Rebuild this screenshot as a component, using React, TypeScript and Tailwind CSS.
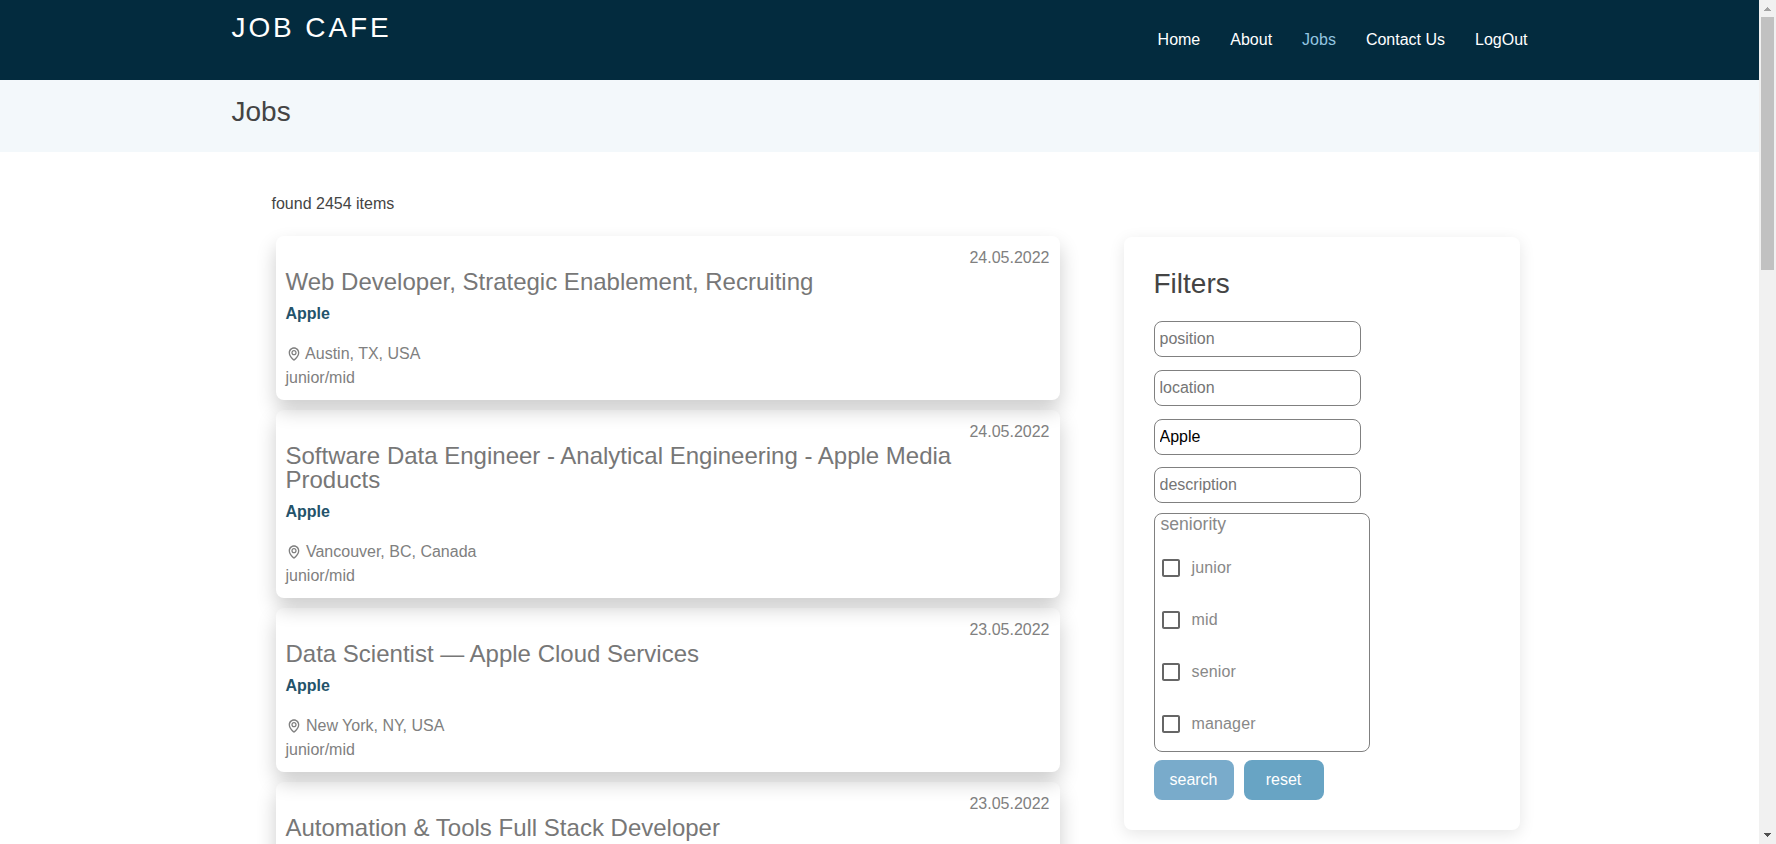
import { BiMap } from "react-icons/bi";
import { MdCheckBoxOutlineBlank } from "react-icons/md";

type Job = { title: string; company: string; location: string; level: string; date: string };

const jobs: Job[] = [
  { title: "Web Developer, Strategic Enablement, Recruiting", company: "Apple", location: "Austin, TX, USA", level: "junior/mid", date: "24.05.2022" },
  { title: "Software Data Engineer - Analytical Engineering - Apple Media Products", company: "Apple", location: "Vancouver, BC, Canada", level: "junior/mid", date: "24.05.2022" },
  { title: "Data Scientist — Apple Cloud Services", company: "Apple", location: "New York, NY, USA", level: "junior/mid", date: "23.05.2022" },
  { title: "Automation & Tools Full Stack Developer", company: "", location: "", level: "", date: "23.05.2022" },
];

const links = ["Home", "About", "Jobs", "Contact Us", "LogOut"];
const levels = ["junior", "mid", "senior", "manager"];

function JobCard({ job }: { job: Job }) {
  return (
    <article className="min-h-[164px] rounded-lg p-[10px] text-[#808080] shadow-[0_10px_20px_rgba(0,0,0,0.2)]">
      <p className="text-right">{job.date}</p>
      <h2 className="pr-[90px] text-2xl leading-6 text-[#777777]">{job.title}</h2>
      {job.company && (
        <>
          <p className="mt-2 font-bold text-[#24536b]">{job.company}</p>
          <p className="mt-4">
            <BiMap className="inline size-4 align-[-3px]" />
            {` ${job.location}`}
          </p>
          <p>{job.level}</p>
        </>
      )}
    </article>
  );
}

function Field({ name, value, className }: { name: string; value?: string; className: string }) {
  return (
    <input
      className={`block h-9 w-[207px] rounded-lg border border-[#808080] pr-1 pl-[5px] text-black placeholder:text-[#757575] ${className}`}
      placeholder={name}
      defaultValue={value}
    />
  );
}

function Scrollbar() {
  return (
    <div className="flex w-[17px] shrink-0 flex-col items-center justify-between bg-[#f1f1f1]">
      <div className="flex flex-col items-center">
        <svg className="h-[17px] w-[17px]" viewBox="0 0 17 17" shapeRendering="crispEdges" fill="#a3a3a3">
          <path d="M8 7h1v1h1v1h1v1h1v1H5v-1h1V9h1V8h1z" />
        </svg>
        <div className="h-[253px] w-[13px] bg-[#c1c1c1]" />
      </div>
      <svg className="h-[17px] w-[17px]" viewBox="0 0 17 17" shapeRendering="crispEdges" fill="#505050">
        <path d="M5 6h7v1h-1v1h-1v1H9v1H8V9H7V8H6V7H5z" />
      </svg>
    </div>
  );
}

export default function App() {
  return (
    <div className="flex h-[844px] overflow-hidden bg-white font-['Liberation_Sans',Arial,sans-serif] text-base text-[#444444]">
      <div className="min-w-0 flex-1">
        <header className="h-20 bg-[#032b3e]">
          <div className="mx-auto flex w-[1296px] justify-between text-white">
            <h1 className="pt-[11px] text-[28px] leading-[34px] tracking-[2.9px]">JOB CAFE</h1>
            <nav className="flex gap-[30px] pt-7">
              {links.map((l) => (
                <a key={l} href="#" className={l === "Jobs" ? "text-[#94c5e0]" : "text-white"}>{l}</a>
              ))}
            </nav>
          </div>
        </header>
        <div className="h-18 bg-[#f3f8fb]">
          <h1 className="mx-auto w-[1296px] pt-[15px] text-[28px] leading-[34px]">Jobs</h1>
        </div>
        <main className="mx-auto w-[1296px] pt-10 pl-10">
          <p>found 2454 items</p>
          <div className="flex items-start pt-5">
            <section className="ml-1 flex w-[784px] shrink-0 flex-col gap-[10px]">
              {jobs.map((job) => (
                <JobCard key={job.title} job={job} />
              ))}
            </section>
            <aside className="mt-px ml-16 h-[593px] w-[396px] shrink-0 rounded-lg px-[30px] pt-[30px] shadow-[0_4px_16px_rgba(0,0,0,0.1)]">
              <h2 className="text-[28px] leading-[34px]">Filters</h2>
              <Field name="position" className="mt-5" />
              <Field name="location" className="mt-[13px]" />
              <Field name="company" value="Apple" className="mt-[13px]" />
              <Field name="description" className="mt-3" />
              <div className="mt-[10px] h-[239px] w-[216px] rounded-lg border border-[#808080] text-[#888888]">
                <p className="pl-[6px] text-[17.6px] leading-[21px]">seniority</p>
                <div className="pt-[7px]">
                  {levels.map((l) => (
                    <label key={l} className="flex h-[52px] items-center pl-1 tracking-[0.15px]">
                      <MdCheckBoxOutlineBlank className="mr-[9px] size-6 text-[#666666]" />
                      {l}
                    </label>
                  ))}
                </div>
              </div>
              <div className="mt-2 flex gap-[10px] text-white">
                <button className="h-10 w-20 rounded-lg bg-[#79abcb]">search</button>
                <button className="h-10 w-20 rounded-lg bg-[#68a4c4]">reset</button>
              </div>
            </aside>
          </div>
        </main>
      </div>
      <Scrollbar />
    </div>
  );
}
